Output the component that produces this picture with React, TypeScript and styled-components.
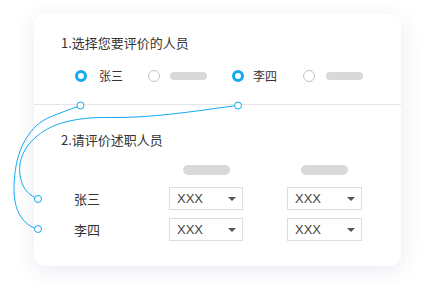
import styled, { createGlobalStyle } from 'styled-components';

const GlobalStyle = createGlobalStyle`
    html, body {
        margin: 0;
        padding: 0;
        background: #ffffff;
    }
    body {
        font-family: 'Noto Sans CJK SC', 'Noto Sans', sans-serif;
        color: #333333;
    }
`;

const BLUE = '#12a9ef';

type Choice = { name?: string; checked: boolean; gap: number; width: number };

const choices: Choice[] = [
    { name: '张三', checked: true, gap: 12, width: 73 },
    { checked: false, gap: 10, width: 84 },
    { name: '李四', checked: true, gap: 9, width: 71 },
    { checked: false, gap: 11, width: 70 },
];

const people = ['张三', '李四'];

const App = () => {
    return (
        <>
            <GlobalStyle />
            <StyledPage>
                <StyledCard>
                    <StyledPickSection>
                        <StyledTitle>1.选择您要评价的人员</StyledTitle>
                        <StyledRadioRow>
                            {choices.map((c, i) => (
                                <StyledChoice key={i} $gap={c.gap} $width={c.width}>
                                    <StyledRadio $checked={c.checked} />
                                    {c.name ? (
                                        <StyledChoiceText>{c.name}</StyledChoiceText>
                                    ) : (
                                        <StyledPill $width={37} $height={8} />
                                    )}
                                </StyledChoice>
                            ))}
                        </StyledRadioRow>
                    </StyledPickSection>
                    <StyledRateSection>
                        <StyledTitle>2.请评价述职人员</StyledTitle>
                        <StyledGrid>
                            <span />
                            <StyledHeadCell>
                                <StyledPill $width={47} $height={10} />
                            </StyledHeadCell>
                            <StyledHeadCell>
                                <StyledPill $width={47} $height={10} />
                            </StyledHeadCell>
                            {people.map((p) => (
                                <StyledRowGroup key={p}>
                                    <StyledPersonName>{p}</StyledPersonName>
                                    <StyledSelect>
                                        XXX
                                        <StyledCaret />
                                    </StyledSelect>
                                    <StyledSelect>
                                        XXX
                                        <StyledCaret />
                                    </StyledSelect>
                                </StyledRowGroup>
                            ))}
                        </StyledGrid>
                    </StyledRateSection>
                </StyledCard>
            </StyledPage>
            {/* connectors from the picked names to the rows below */}
            <StyledOverlay
                width="425"
                height="286"
                viewBox="0 0 425 286"
                fill="none"
                stroke={BLUE}
                strokeWidth="1"
            >
                <path d="M77.5 106.5 C 58 114, 44 118, 36 126 C 22 140, 14 160, 14 190 C 14 212, 24 224, 34.5 228" />
                <path d="M234.5 105.8 C 190 112, 150 118, 110 117.5 C 80 117, 58 122, 44 131 C 24 144, 18 160, 20 175 C 22 188, 28 194, 34.8 197.5" />
                <circle cx="80.5" cy="105.5" r="3.5" fill="#fff" />
                <circle cx="238" cy="105.5" r="3.5" fill="#fff" />
                <circle cx="38" cy="199" r="3.5" fill="#fff" />
                <circle cx="38" cy="229" r="3.5" fill="#fff" />
            </StyledOverlay>
        </>
    );
};

const StyledPage = styled.div`
    padding: 14px 0 0 34px;
    width: 425px;
    height: 286px;
    box-sizing: border-box;
`;

const StyledCard = styled.div`
    position: relative;
    width: 367px;
    height: 252px;
    background: #ffffff;
    border-radius: 10px;
    box-shadow: 0 4px 22px rgba(40, 60, 120, 0.1);
`;

const StyledOverlay = styled.svg`
    position: absolute;
    left: 0;
    top: 0;
    pointer-events: none;
`;

const StyledPickSection = styled.div`
    height: 91px;
    box-sizing: border-box;
    padding: 20px 0 0 27px;
    border-bottom: 1px solid #e6e6e6;
`;

const StyledRateSection = styled.div`
    padding: 26px 0 0 27px;
`;

const StyledTitle = styled.div`
    font-size: 13px;
    line-height: 18px;
    color: #333333;
`;

const StyledRadioRow = styled.div`
    display: flex;
    align-items: center;
    height: 16px;
    margin-top: 16px;
    padding-left: 14px;
`;

const StyledChoice = styled.div<{ $gap: number; $width: number }>`
    display: flex;
    align-items: center;
    gap: ${(p) => p.$gap}px;
    width: ${(p) => p.$width}px;
    flex: none;
`;

const StyledRadio = styled.span<{ $checked: boolean }>`
    width: 12px;
    height: 12px;
    box-sizing: border-box;
    border-radius: 50%;
    flex: none;
    border: ${(p) => (p.$checked ? `3.5px solid ${BLUE}` : '1px solid #c4c4c4')};
    background: #ffffff;
`;

const StyledChoiceText = styled.span`
    font-size: 12px;
    line-height: 16px;
    color: #333333;
`;

const StyledPill = styled.span<{ $width: number; $height: number }>`
    display: block;
    width: ${(p) => p.$width}px;
    height: ${(p) => p.$height}px;
    border-radius: ${(p) => p.$height / 2}px;
    background: #d9d9d9;
`;

const StyledGrid = styled.div`
    display: grid;
    grid-template-columns: 51px 74px 75px;
    column-gap: 44px;
    row-gap: 8px;
    margin: 16px 0 0 13px;
`;

const StyledRowGroup = styled.div`
    display: contents;
`;

const StyledHeadCell = styled.div`
    display: flex;
    justify-content: center;
    height: 10px;
    margin-bottom: 4px;
`;

const StyledPersonName = styled.div`
    display: flex;
    align-items: center;
    font-size: 13px;
    color: #333333;
`;

const StyledSelect = styled.div`
    position: relative;
    height: 23px;
    box-sizing: border-box;
    border: 1px solid #dddddd;
    padding-left: 7px;
    display: flex;
    align-items: center;
    font-family: 'Liberation Sans', Arial, sans-serif;
    font-size: 13px;
    color: #444444;
`;

const StyledCaret = styled.span`
    position: absolute;
    right: 6px;
    top: 9px;
    width: 0;
    height: 0;
    border-left: 4px solid transparent;
    border-right: 4px solid transparent;
    border-top: 4px solid #555555;
`;

export default App;
